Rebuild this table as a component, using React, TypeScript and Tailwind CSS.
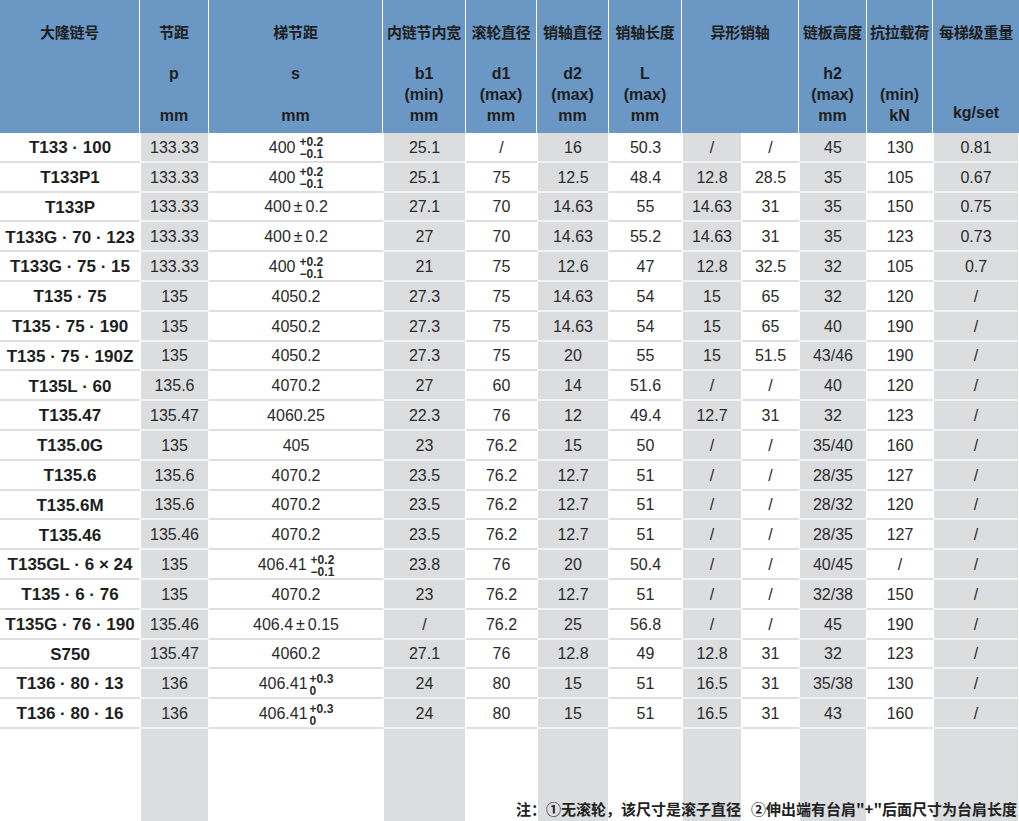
import React from "react";

type Cell = React.ReactNode;

const Tol = ({ base, up, down }: { base: string; up: string; down: string }) => (
  <span className="inline-flex items-center">
    <span>{base}</span>
    <span className="ml-[4px] flex flex-col items-start text-[12px] font-bold leading-[12px] mt-[1px]">
      <span>{up}</span>
      <span>{down}</span>
    </span>
  </span>
);

const Tol0 = ({ base, up }: { base: string; up: string }) => (
  <span className="inline-flex items-center">
    <span>{base}</span>
    <span className="ml-[2px] flex flex-col items-start text-[12px] font-bold leading-[12px] mt-[1px]">
      <span>{up}</span>
      <span>0</span>
    </span>
  </span>
);

const PM = ({ a, b }: { a: string; b: string }) => (
  <span>
    {a}
    <span className="mx-[3px]">±</span>
    {b}
  </span>
);

const tolA = <Tol base="400" up="+0.2" down="−0.1" />;

const rows: Cell[][] = [
  ["T133 · 100", "133.33", tolA, "25.1", "/", "16", "50.3", "/", "/", "45", "130", "0.81"],
  ["T133P1", "133.33", tolA, "25.1", "75", "12.5", "48.4", "12.8", "28.5", "35", "105", "0.67"],
  ["T133P", "133.33", <PM a="400" b="0.2" />, "27.1", "70", "14.63", "55", "14.63", "31", "35", "150", "0.75"],
  ["T133G · 70 · 123", "133.33", <PM a="400" b="0.2" />, "27", "70", "14.63", "55.2", "14.63", "31", "35", "123", "0.73"],
  ["T133G · 75 · 15", "133.33", tolA, "21", "75", "12.6", "47", "12.8", "32.5", "32", "105", "0.7"],
  ["T135 · 75", "135", "4050.2", "27.3", "75", "14.63", "54", "15", "65", "32", "120", "/"],
  ["T135 · 75 · 190", "135", "4050.2", "27.3", "75", "14.63", "54", "15", "65", "40", "190", "/"],
  ["T135 · 75 · 190Z", "135", "4050.2", "27.3", "75", "20", "55", "15", "51.5", "43/46", "190", "/"],
  ["T135L · 60", "135.6", "4070.2", "27", "60", "14", "51.6", "/", "/", "40", "120", "/"],
  ["T135.47", "135.47", "4060.25", "22.3", "76", "12", "49.4", "12.7", "31", "32", "123", "/"],
  ["T135.0G", "135", "405", "23", "76.2", "15", "50", "/", "/", "35/40", "160", "/"],
  ["T135.6", "135.6", "4070.2", "23.5", "76.2", "12.7", "51", "/", "/", "28/35", "127", "/"],
  ["T135.6M", "135.6", "4070.2", "23.5", "76.2", "12.7", "51", "/", "/", "28/32", "120", "/"],
  ["T135.46", "135.46", "4070.2", "23.5", "76.2", "12.7", "51", "/", "/", "28/35", "127", "/"],
  ["T135GL · 6 × 24", "135", <Tol base="406.41" up="+0.2" down="−0.1" />, "23.8", "76", "20", "50.4", "/", "/", "40/45", "/", "/"],
  ["T135 · 6 · 76", "135", "4070.2", "23", "76.2", "12.7", "51", "/", "/", "32/38", "150", "/"],
  ["T135G · 76 · 190", "135.46", <PM a="406.4" b="0.15" />, "/", "76.2", "25", "56.8", "/", "/", "45", "190", "/"],
  ["S750", "135.47", "4060.2", "27.1", "76", "12.8", "49", "12.8", "31", "32", "123", "/"],
  ["T136 · 80 · 13", "136", <Tol0 base="406.41" up="+0.3" />, "24", "80", "15", "51", "16.5", "31", "35/38", "130", "/"],
  ["T136 · 80 · 16", "136", <Tol0 base="406.41" up="+0.3" />, "24", "80", "15", "51", "16.5", "31", "43", "160", "/"],
];

type Head = { title: string; sym?: string; paren?: string; unit?: string; span?: number };

const heads: Head[] = [
  { title: "大隆链号" },
  { title: "节距", sym: "p", unit: "mm" },
  { title: "梯节距", sym: "s", unit: "mm" },
  { title: "内链节内宽", sym: "b1", paren: "(min)", unit: "mm" },
  { title: "滚轮直径", sym: "d1", paren: "(max)", unit: "mm" },
  { title: "销轴直径", sym: "d2", paren: "(max)", unit: "mm" },
  { title: "销轴长度", sym: "L", paren: "(max)", unit: "mm" },
  { title: "异形销轴", span: 2 },
  { title: "链板高度", sym: "h2", paren: "(max)", unit: "mm" },
  { title: "抗拉载荷", paren: "(min)", unit: "kN" },
  { title: "每梯级重量", unit: "kg/set" },
];

const isGrey = (i: number) => i % 2 === 1;

export default function App() {
  return (
    <div
      className="grid h-[821px] w-[1019px] grid-cols-[140px_69px_174px_83px_71px_72px_73px_60px_57px_68px_66px_86px] grid-rows-[133px_repeat(20,29.8px)_1fr] bg-white text-[#2b2b2b]"
      style={{ fontFamily: '"Liberation Sans", Arial, "Noto Sans CJK SC", sans-serif' }}
    >
      {heads.map((h, i) => (
        <div
          key={i}
          className={`flex flex-col items-center bg-[#6a97c4] pt-[21px] text-center leading-[21px] text-[#1e1e1e] ${
            i < heads.length - 1 ? "border-r border-white" : ""
          } ${h.span === 2 ? "col-span-2" : ""}`}
        >
          <div className="text-[15px] font-semibold tracking-[-0.2px]" style={{ fontFamily: '"Noto Sans CJK SC", sans-serif' }}>
            {h.title}
          </div>
          <div className="h-[21px]" />
          <div className="h-[21px] text-[16px] font-bold">{h.sym ?? ""}</div>
          <div className="h-[21px] text-[16px] font-bold">{h.paren ?? ""}</div>
          <div className={`h-[21px] text-[16px] font-bold ${h.unit === "kg/set" ? "-mt-[3px]" : ""}`}>{h.unit ?? ""}</div>
        </div>
      ))}

      {rows.map((r, ri) =>
        r.map((c, ci) => (
          <div
            key={`${ri}-${ci}`}
            className={`flex items-center justify-center whitespace-nowrap border-b-2 pt-[2px] ${
              isGrey(ci) ? "border-x border-x-white border-b-[#f3f3f4] bg-[#dcdddf]" : "border-b-[#e0e0e0] bg-white"
            } ${ci === 0 ? "text-[17px] font-bold text-[#1e1e1e]" : "text-[16px]"}`}
          >
            {c}
          </div>
        ))
      )}

      {Array.from({ length: 12 }).map((_, ci) => (
        <div
          key={`f-${ci}`}
          className={`row-start-22 ${isGrey(ci) ? "border-x border-white bg-[#dcdddf]" : "bg-white"}`}
          style={{ gridColumnStart: ci + 1 }}
        />
      ))}

      <div
        className="col-start-5 col-end-13 row-start-22 flex self-end justify-self-end whitespace-nowrap pb-[1px] pr-[2px] text-[15px] font-bold leading-[22px] text-[#222]"
        style={{ fontFamily: '"Noto Sans CJK SC", sans-serif' }}
      >
        <span>注：①无滚轮，该尺寸是滚子直径</span>
        <span className="ml-[10px]">②伸出端有台肩"+"后面尺寸为台肩长度</span>
      </div>
    </div>
  );
}
